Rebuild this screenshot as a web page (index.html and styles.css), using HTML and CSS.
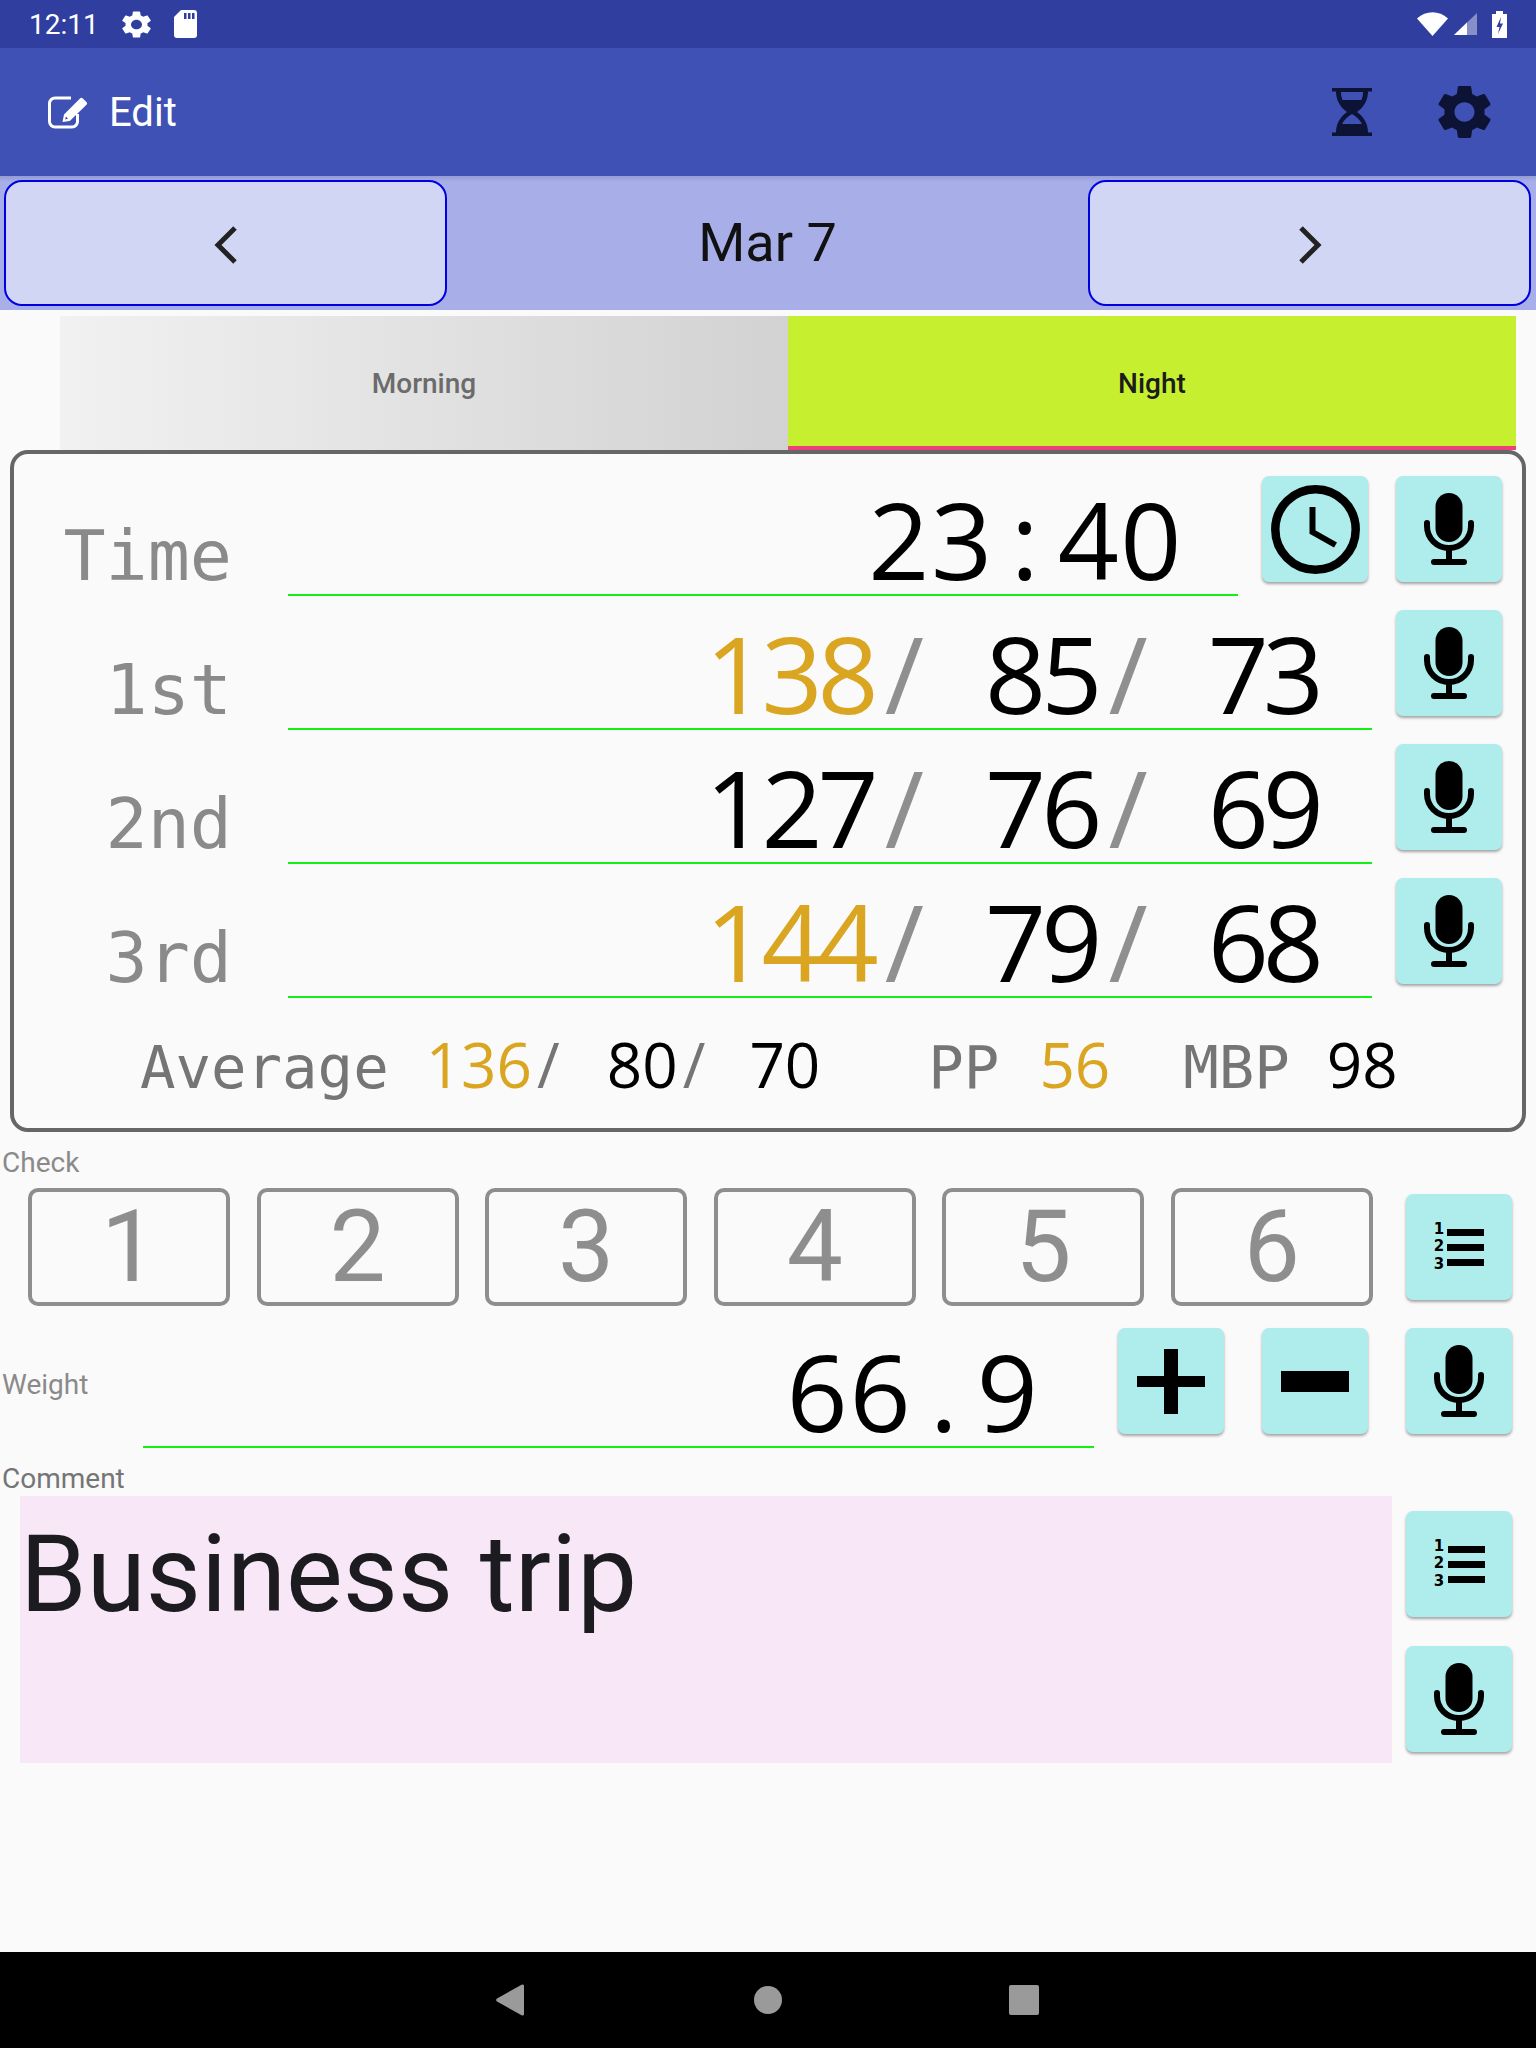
FILE: index.html
```html
<!DOCTYPE html>
<html>
<head>
<title>Blood pressure - Edit</title>
<link rel="stylesheet" href="styles.css">
</head>
<body>

<svg class="icon-defs" width="0" height="0">
    <symbol id="mic" viewBox="0 0 50 72">
        <rect x="11.500" y="0" width="27" height="49" rx="13.500"/>
        <path class="line" d="M3 30v3a22 22 0 0 0 44 0v-3M25 55v13M10 69h30"/>
    </symbol>
    <symbol id="gear" viewBox="2.5 2 19 20" preserveAspectRatio="none">
        <path d="M19.14 12.94c.04-.3.06-.61.06-.94 0-.32-.02-.64-.07-.94l2.03-1.58c.18-.14.23-.41.12-.61l-1.92-3.32c-.12-.22-.37-.29-.59-.22l-2.39.96c-.5-.38-1.03-.7-1.62-.94l-.36-2.54c-.04-.24-.24-.41-.48-.41h-3.84c-.24 0-.43.17-.47.41l-.36 2.54c-.59.24-1.13.57-1.62.94l-2.39-.96c-.22-.08-.47 0-.59.22L2.74 8.87c-.12.21-.08.47.12.61l2.03 1.58c-.05.3-.09.63-.09.94s.02.64.07.94l-2.03 1.58c-.18.14-.23.41-.12.61l1.92 3.32c.12.22.37.29.59.22l2.39-.96c.5.38 1.03.7 1.62.94l.36 2.54c.05.24.24.41.48.41h3.84c.24 0 .44-.17.47-.41l.36-2.54c.59-.24 1.13-.56 1.62-.94l2.39.96c.22.08.47 0 .59-.22l1.92-3.32c.12-.22.07-.47-.12-.61l-2.01-1.58zM12 15.6c-1.98 0-3.6-1.62-3.6-3.6s1.62-3.6 3.6-3.6 3.6 1.62 3.6 3.6-1.62 3.6-3.6 3.6z"/>
    </symbol>
</svg>

<div class="screen">

    <div class="status-bar">
        <span class="status-time">12:11</span>
        <svg class="status-gear"><use href="#gear"/></svg>
        <svg class="status-sd" viewBox="0 0 23 28">
            <path fill="#fff" d="M7 0h13a3 3 0 0 1 3 3v22a3 3 0 0 1-3 3H3a3 3 0 0 1-3-3V7z"/>
            <path fill="#303f9f" d="M10 3h2.500v6H10zM14 3h2.500v6H14zM18 3h2.500v6H18z"/>
        </svg>
        <div class="status-right">
            <svg class="status-wifi" viewBox="0 0 31 24"><path fill="#fff" d="M0 6.500C9-2 22-2 31 6.500L15.500 24z"/></svg>
            <svg class="status-signal" viewBox="0 0 23 22">
                <path fill="#fff" opacity=".42" d="M0 22L23 0v22z"/>
                <path fill="#fff" d="M0 22L13 9.500V22z"/>
            </svg>
            <svg class="status-battery" viewBox="0 0 15 27">
                <path fill="#fff" d="M4 0h7v3h4v24H0V3h4z"/>
                <path fill="#303f9f" d="M9 6l-4.500 10h3L6 23l5-10.500H8z"/>
            </svg>
        </div>
    </div>

    <div class="app-bar">
        <svg class="edit-icon" viewBox="0 0 40 33">
            <path class="edit-box" d="M23 2H7a5.500 5.500 0 0 0-5.500 5.500v18A5.500 5.500 0 0 0 7 31h17a5.500 5.500 0 0 0 5.500-5.500V18"/>
            <path fill="#fff" d="M14.500 26l1.500-7.500L32 2.500a2 2 0 0 1 2.800 0l3.700 3.500a2 2 0 0 1 0 2.800L21.800 25zM18 20.500l-1 3 3-.8z"/>
        </svg>
        <span class="app-title">Edit</span>
        <svg class="hourglass" viewBox="0 0 40 48">
            <path fill-rule="evenodd" d="M0 0H40V3.500H36C36 12 32 19 25 24C32 29 36 36 36 44.500H40V48H0V44.500H4C4 36 8 29 15 24C8 19 4 12 4 3.500H0ZM9 4C9 7 9.500 9 10.500 12H29.500C30.500 9 31 7 31 4ZM20 26C15 29 12 32 10 36H30C28 32 25 29 20 26Z"/>
        </svg>
        <svg class="app-gear"><use href="#gear"/></svg>
    </div>

    <div class="date-bar">
        <button class="date-btn">
            <svg class="chevron" viewBox="0 0 24 38"><path d="M21 2L4 19l17 17"/></svg>
        </button>
        <div class="date-text">Mar 7</div>
        <button class="date-btn">
            <svg class="chevron" viewBox="0 0 24 38"><path d="M3 2l17 17-17 17"/></svg>
        </button>
    </div>

    <div class="tabs">
        <div class="tab tab-morning">Morning</div>
        <div class="tab tab-night">Night</div>
    </div>

    <div class="card">
        <div class="row">
            <div class="row-label">Time</div>
            <div class="reading reading-time">23<span class="mono-gap">:</span>40</div>
            <button class="sq-btn clock-btn">
                <svg class="clock-icon" viewBox="0 0 89 89">
                    <circle cx="44.500" cy="44.500" r="40.200"/>
                    <path d="M41.500 22v25l23 13"/>
                </svg>
            </button>
            <button class="sq-btn"><svg class="mic-icon"><use href="#mic"/></svg></button>
        </div>
        <div class="row">
            <div class="row-label">1st</div>
            <div class="reading">
                <span class="num sys high">138</span><span class="slash">/</span>
                <span class="num dia">85</span><span class="slash">/</span>
                <span class="num pulse">73</span>
            </div>
            <button class="sq-btn"><svg class="mic-icon"><use href="#mic"/></svg></button>
        </div>
        <div class="row">
            <div class="row-label">2nd</div>
            <div class="reading">
                <span class="num sys">127</span><span class="slash">/</span>
                <span class="num dia">76</span><span class="slash">/</span>
                <span class="num pulse">69</span>
            </div>
            <button class="sq-btn"><svg class="mic-icon"><use href="#mic"/></svg></button>
        </div>
        <div class="row">
            <div class="row-label">3rd</div>
            <div class="reading">
                <span class="num sys high">144</span><span class="slash">/</span>
                <span class="num dia">79</span><span class="slash">/</span>
                <span class="num pulse">68</span>
            </div>
            <button class="sq-btn"><svg class="mic-icon"><use href="#mic"/></svg></button>
        </div>
        <div class="average">
            <span class="avg-label">Average</span>
            <span class="avg-num avg-sys high">136</span><span class="avg-slash">/</span>
            <span class="avg-num avg-dia">80</span><span class="avg-slash">/</span>
            <span class="avg-num avg-pulse">70</span>
            <span class="avg-label avg-pp">PP</span>
            <span class="avg-num avg-pp-val high">56</span>
            <span class="avg-label avg-mbp">MBP</span>
            <span class="avg-num avg-mbp-val">98</span>
        </div>
    </div>

    <div class="field-label check-label">Check</div>
    <div class="check-row">
        <div class="check-box">1</div>
        <div class="check-box">2</div>
        <div class="check-box">3</div>
        <div class="check-box">4</div>
        <div class="check-box">5</div>
        <div class="check-box">6</div>
        <button class="sq-btn list-btn">
            <span class="list-nums">1<br>2<br>3</span>
            <span class="list-bars"><i></i><i></i><i></i></span>
        </button>
    </div>

    <div class="weight-row">
        <div class="field-label weight-label">Weight</div>
        <div class="reading reading-weight">66<span class="mono-gap">.</span>9</div>
        <button class="sq-btn"><svg class="sign-icon" viewBox="0 0 68 65"><path d="M27 0h14v27h27v11H41v27H27V38H0V27h27z"/></svg></button>
        <button class="sq-btn minus-btn"><svg class="sign-icon" viewBox="0 0 68 65"><path d="M0 22h68v21H0z"/></svg></button>
        <button class="sq-btn minus-btn"><svg class="mic-icon"><use href="#mic"/></svg></button>
    </div>

    <div class="field-label comment-label">Comment</div>
    <div class="comment-row">
        <div class="comment-box">Business trip</div>
        <div class="comment-side">
            <button class="sq-btn">
                <span class="list-nums">1<br>2<br>3</span>
                <span class="list-bars"><i></i><i></i><i></i></span>
            </button>
            <button class="sq-btn"><svg class="mic-icon"><use href="#mic"/></svg></button>
        </div>
    </div>

    <div class="nav-bar">
        <svg class="nav-back" viewBox="0 0 28 32"><path d="M26 0.500a1.500 1.500 0 0 1 2 1.500v28a1.500 1.500 0 0 1-2 1.500L1 17.500a2 2 0 0 1 0-3z"/></svg>
        <div class="nav-home"></div>
        <div class="nav-recent"></div>
    </div>

</div>

</body>
</html>
```

FILE: styles.css
```css
body {
    margin: 0;
    font-family: Roboto, sans-serif;
    background-color: #fafafa;
}
.icon-defs {
    position: absolute;
}
.screen {
    display: flex;
    flex-direction: column;
    height: 2048px;
    overflow: hidden;
}

/* status bar */
.status-bar {
    display: flex;
    align-items: center;
    flex: none;
    height: 48px;
    background-color: #303f9f;
    color: #fff;
    padding-left: 29px;
    padding-right: 29px;
}
.status-time {
    font-size: 28px;
    width: 93px;
}
.status-gear {
    width: 29px;
    height: 27px;
    fill: #fff;
    margin-right: 23px;
}
.status-sd {
    width: 23px;
    height: 28px;
}
.status-right {
    display: flex;
    align-items: center;
    margin-left: auto;
}
.status-wifi {
    width: 31px;
    height: 24px;
    margin-right: 6px;
}
.status-signal {
    width: 23px;
    height: 22px;
    margin-right: 15px;
}
.status-battery {
    width: 15px;
    height: 27px;
}

/* app bar */
.app-bar {
    display: flex;
    align-items: center;
    flex: none;
    height: 128px;
    background-color: #3f51b5;
    padding-left: 48px;
    padding-right: 45px;
}
.edit-icon {
    width: 40px;
    height: 33px;
    margin-right: 21px;
}
.edit-box {
    fill: none;
    stroke: #fff;
    stroke-width: 3px;
}
.app-title {
    font-size: 40px;
    color: #fff;
}
.hourglass {
    width: 40px;
    height: 48px;
    fill: #0d1335;
    margin-left: auto;
    margin-right: 66px;
}
.app-gear {
    width: 53px;
    height: 54px;
    fill: #0d1335;
}

/* date bar */
.date-bar {
    display: flex;
    align-items: center;
    justify-content: space-between;
    flex: none;
    height: 134px;
    box-sizing: border-box;
    padding: 0 5px 0 4px;
    background: linear-gradient(#959cd4, #a8afe8 6px);
}
.date-btn {
    display: flex;
    align-items: center;
    justify-content: center;
    width: 443px;
    height: 126px;
    padding: 4px 0 0;
    border: 2px solid #0000e0;
    border-radius: 18px;
    background-color: #d2d6f5;
}
.chevron {
    width: 24px;
    height: 38px;
    fill: none;
    stroke: #222;
    stroke-width: 5px;
}
.date-text {
    font-size: 54px;
    color: #111;
    margin-bottom: 2px;
}

/* tabs */
.tabs {
    display: flex;
    flex: none;
    height: 134px;
    margin: 6px 20px 0 60px;
}
.tab {
    display: flex;
    align-items: center;
    justify-content: center;
    flex: 1;
    font-size: 28px;
    font-weight: 500;
    box-sizing: border-box;
    padding-top: 1px;
}
.tab-morning {
    background: linear-gradient(to right, #f1f1f1, #d2d2d2);
    color: #6b6b6b;
}
.tab-night {
    background-color: #c6f02f;
    box-shadow: inset 0 -4px 0 #ec407a;
    color: #1c1c1c;
}

/* card with the readings */
.card {
    flex: none;
    height: 682px;
    box-sizing: border-box;
    margin: 0 10px;
    padding: 22px 20px 0 0;
    border: 4px solid #666;
    border-radius: 18px;
}
.row {
    display: flex;
    align-items: flex-start;
    height: 134px;
}
.row-label {
    width: 218px;
    margin-right: 56px;
    padding-top: 30px;
    font-family: "DejaVu Sans Mono", monospace;
    font-size: 70px;
    line-height: 100px;
    text-align: right;
    color: #8a8a8a;
}
.reading {
    display: flex;
    flex: 1;
    align-items: baseline;
    justify-content: flex-end;
    height: 120px;
    box-sizing: border-box;
    padding-right: 54px;
    margin-right: 24px;
    border-bottom: 2px solid #14f014;
    font-family: "Open Sans", sans-serif;
    font-size: 107px;
    line-height: 126px;
    color: #000;
}
.reading-time {
    padding-right: 55px;
    letter-spacing: 1.5px;
}
.mono-gap {
    width: 64px;
    text-align: center;
}
.num {
    letter-spacing: -5px;
}
.high {
    color: #daa520;
}
.slash {
    color: #8f8f8f;
    margin-left: 11px;
}
.dia {
    margin-left: 61px;
}
.pulse {
    margin-left: 60px;
    letter-spacing: -6px;
}
.sq-btn {
    display: flex;
    align-items: center;
    justify-content: center;
    flex: none;
    width: 106px;
    height: 106px;
    padding: 0;
    border: none;
    border-radius: 7px;
    background-color: #afecec;
    box-shadow: 0 2px 3px rgba(0, 0, 0, 0.35);
}
.clock-btn {
    margin-right: 28px;
}
.mic-icon {
    width: 50px;
    height: 72px;
    fill: #000;
}
symbol .line {
    fill: none;
    stroke: #000;
    stroke-width: 6px;
    stroke-linecap: round;
}
.clock-icon {
    width: 89px;
    height: 89px;
    fill: none;
    stroke: #000;
}
.clock-icon circle {
    stroke-width: 8.5px;
}
.clock-icon path {
    stroke-width: 6px;
}

/* average line */
.average {
    display: flex;
    align-items: baseline;
    padding-top: 6px;
    padding-left: 126px;
    font-size: 59px;
    line-height: 92px;
    color: #757575;
}
.avg-label {
    font-family: "DejaVu Sans Mono", monospace;
}
.avg-num {
    font-family: "Open Sans", sans-serif;
    font-size: 62px;
    color: #000;
}
.avg-num.high {
    color: #daa520;
}
.avg-slash {
    font-family: "Open Sans", sans-serif;
    font-size: 62px;
    margin-left: 5px;
}
.avg-sys {
    margin-left: 37px;
}
.avg-dia {
    margin-left: 47px;
}
.avg-pulse {
    margin-left: 44px;
}
.avg-pp {
    margin-left: 108px;
}
.avg-pp-val {
    margin-left: 40px;
}
.avg-mbp {
    margin-left: 73px;
}
.avg-mbp-val {
    margin-left: 37px;
}

/* lower part */
.field-label {
    font-size: 28px;
    color: #8a8a8a;
    padding-left: 2px;
}
.check-label {
    height: 56px;
    line-height: 62px;
    box-sizing: border-box;
}
.check-row {
    display: flex;
    align-items: center;
    gap: 26.6px;
    height: 118px;
    padding-left: 28px;
}
.check-box {
    width: 202px;
    height: 118px;
    box-sizing: border-box;
    border: 4px solid #8e8e8e;
    border-radius: 10px;
    font-size: 100px;
    line-height: 110px;
    text-align: center;
    color: #8e8e8e;
}
.list-btn {
    margin-left: 6.4px;
}
.list-nums {
    width: 11px;
    margin-right: 3px;
    font-family: "DejaVu Sans", sans-serif;
    font-weight: bold;
    font-size: 15px;
    line-height: 17.5px;
    color: #000;
}
.list-bars {
    display: flex;
    flex-direction: column;
    gap: 8px;
}
.list-bars i {
    display: block;
    width: 37px;
    height: 7px;
    background-color: #000;
}
.weight-row {
    display: flex;
    align-items: flex-start;
    height: 131px;
    margin-top: 22px;
    padding-right: 24px;
}
.weight-label {
    width: 143px;
    flex: none;
    padding-top: 40px;
    box-sizing: border-box;
}
.reading-weight {
    padding-right: 54px;
    letter-spacing: 2px;
}
.minus-btn {
    margin-left: 38px;
}
.sign-icon {
    width: 68px;
    height: 65px;
    fill: #000;
}
.comment-label {
    height: 37px;
    color: #757575;
    line-height: 39px;
}
.comment-row {
    display: flex;
    align-items: flex-start;
    padding-left: 20px;
}
.comment-box {
    width: 1372px;
    height: 267px;
    box-sizing: border-box;
    padding: 14px 0 0;
    background-color: #f7e7f7;
    font-size: 107px;
    line-height: 130px;
    color: #1c1b1f;
}
.comment-side {
    display: flex;
    flex-direction: column;
    gap: 29px;
    margin-left: 14px;
    padding-top: 15px;
}

/* android nav bar */
.nav-bar {
    display: flex;
    align-items: center;
    flex: none;
    height: 96px;
    margin-top: auto;
    background-color: #000;
    padding-left: 496px;
}
.nav-back {
    width: 28px;
    height: 32px;
    fill: #9a9a9a;
}
.nav-home {
    width: 28px;
    height: 28px;
    border-radius: 50%;
    background-color: #9a9a9a;
    margin-left: 230px;
}
.nav-recent {
    width: 30px;
    height: 30px;
    border-radius: 2px;
    background-color: #9a9a9a;
    margin-left: 227px;
}
```
